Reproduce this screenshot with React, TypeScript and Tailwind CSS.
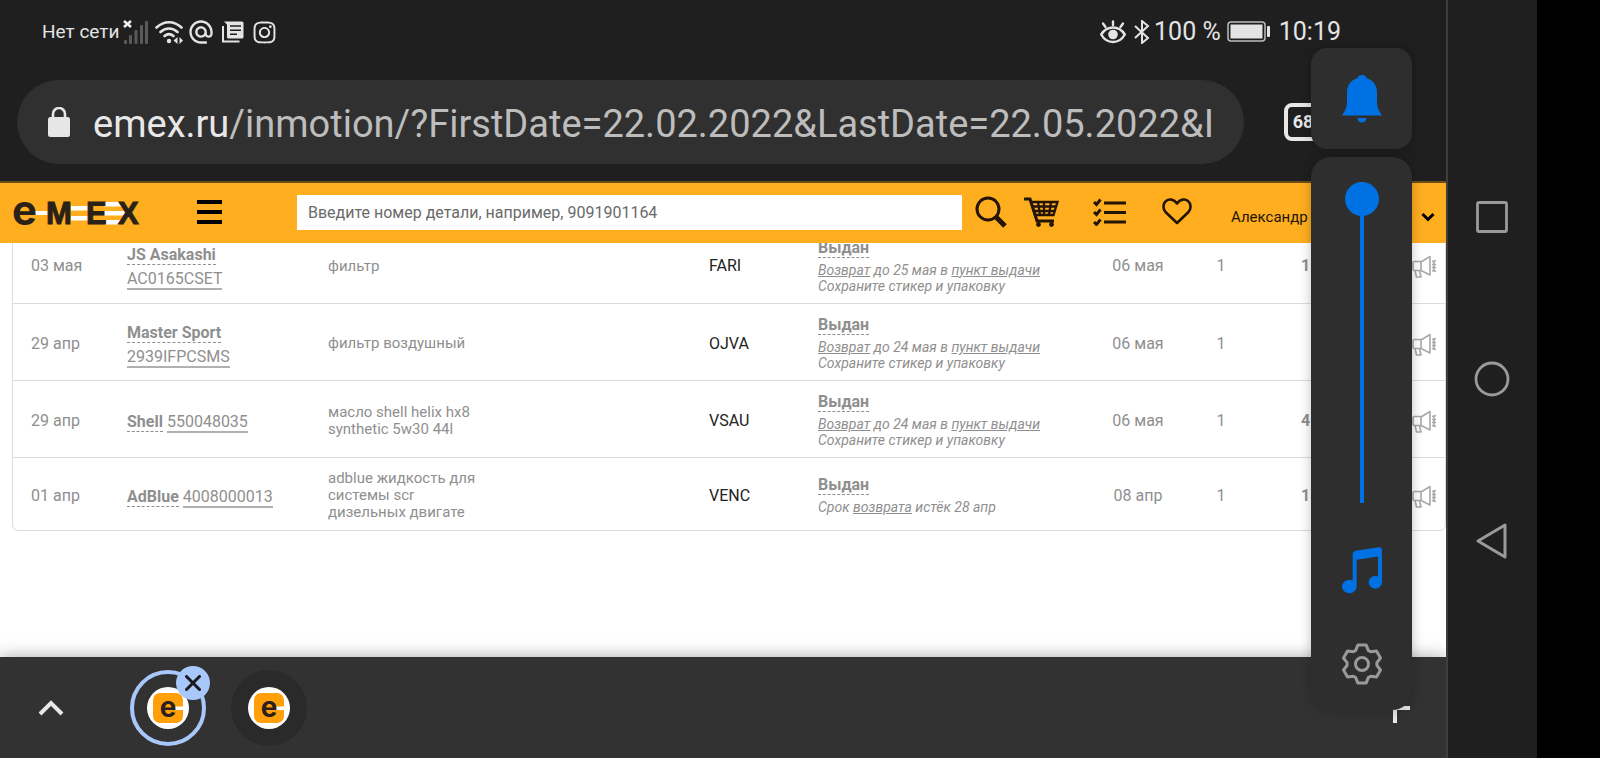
import type { ReactNode } from "react";
import { FaInstagram } from "react-icons/fa";
import { MdAlternateEmail } from "react-icons/md";

type Order = {
  date: string;
  brand: string;
  number: string;
  title: string;
  supplier: string;
  note: ReactNode;
  delivered: string;
  qty: string;
  price: string;
};

function ReturnNote({ until }: { until: string }) {
  return (
    <>
      <a href="#return" className="underline">Возврат</a> до {until} в{" "}
      <a href="#point" className="underline">пункт выдачи</a>
      <br />
      Сохраните стикер и упаковку
    </>
  );
}

const orders: Order[] = [
  {
    date: "03 мая",
    brand: "JS Asakashi",
    number: "AC0165CSET",
    title: "фильтр",
    supplier: "FARI",
    note: <ReturnNote until="25 мая" />,
    delivered: "06 мая",
    qty: "1",
    price: "1",
  },
  {
    date: "29 апр",
    brand: "Master Sport",
    number: "2939IFPCSMS",
    title: "фильтр воздушный",
    supplier: "OJVA",
    note: <ReturnNote until="24 мая" />,
    delivered: "06 мая",
    qty: "1",
    price: "",
  },
  {
    date: "29 апр",
    brand: "Shell",
    number: "550048035",
    title: "масло shell helix hx8 synthetic 5w30 44l",
    supplier: "VSAU",
    note: <ReturnNote until="24 мая" />,
    delivered: "06 мая",
    qty: "1",
    price: "4",
  },
  {
    date: "01 апр",
    brand: "AdBlue",
    number: "4008000013",
    title: "adblue жидкость для системы scr дизельных двигате",
    supplier: "VENC",
    note: (
      <>
        Срок <a href="#return" className="underline">возврата</a> истёк 28 апр
      </>
    ),
    delivered: "08 апр",
    qty: "1",
    price: "1",
  },
];

// Six-tooth gear outline around (22, 22)
const gearPoints = [0, 60, 120, 180, 240, 300]
  .flatMap((a) => [
    [a - 25, 15],
    [a - 12, 19.5],
    [a + 12, 19.5],
    [a + 25, 15],
  ])
  .map(([deg, r]) => {
    const rad = ((deg - 90) * Math.PI) / 180;
    return `${(22 + r * Math.cos(rad)).toFixed(1)},${(22 + r * Math.sin(rad)).toFixed(1)}`;
  })
  .join(" ");

function StatusBar() {
  return (
    <div className="flex h-16 items-center pr-[105px] pl-[42px] text-[#e4e4e4]">
      <span className="text-[19px]">Нет сети</span>
      <svg className="ml-1 h-6 w-[26px]" viewBox="0 0 26 24">
        <path d="M1 1l7 6M8 1l-7 6" stroke="#f0f0f0" strokeWidth="2.6" />
        <g fill="#5a5a5a">
          <rect x="1" y="20" width="3" height="4" rx="1" />
          <rect x="6" y="15" width="3" height="9" rx="1" />
          <rect x="11.5" y="10" width="3" height="14" rx="1" />
          <rect x="17" y="5" width="3" height="19" rx="1" />
          <rect x="22" y="1" width="3" height="23" rx="1" />
        </g>
      </svg>
      <svg className="ml-1.5 h-6 w-7" viewBox="0 0 28 24" fill="none" stroke="currentColor" strokeWidth="2.6" strokeLinecap="round">
        <path d="M1.500 7.500C9 .5 19 .5 26.500 7.500M5.500 12c5-4.600 12-4.600 17 0M9.500 16c2.500-2.200 6-2.600 9 0" />
        <circle cx="14" cy="21" r="2.2" fill="currentColor" stroke="none" />
        <path d="M22.500 17v7l-4-3.500zM24.500 17v7l3.500-3.500z" fill="currentColor" stroke="none" />
      </svg>
      <MdAlternateEmail className="ml-1 size-7" />
      <svg className="ml-[7px] size-[22px]" viewBox="0 0 22 22">
        <path d="M1 5v15.500h16.500" fill="none" stroke="currentColor" strokeWidth="2" />
        <path d="M2 .5h18a1.500 1.500 0 0 1 1.500 1.500v14a1.500 1.500 0 0 1-1.500 1.500H6.500A1.500 1.500 0 0 1 5 16V3.500z" fill="currentColor" />
        <path d="M8 5h11M8 9.200h11M8 13.200h7" stroke="#1f1f1f" strokeWidth="1.5" />
      </svg>
      <FaInstagram className="ml-2 size-[25px]" />

      <div className="ml-auto flex items-center text-[25px]">
        <svg className="h-6 w-[26px]" viewBox="0 0 26 24" fill="none" stroke="currentColor" strokeWidth="2.4" strokeLinecap="round">
          <path d="M1.200 14.500C4 10 8 7.500 13 7.500s9 2.500 11.800 7C22 19.500 18 22 13 22S4 19.500 1.200 14.500z" />
          <circle cx="13" cy="14.5" r="4.8" fill="currentColor" stroke="none" />
          <path d="M13 1.500V5M3 3.500l2.500 3.500M23 3.500L20.500 7" />
        </svg>
        <svg className="ml-2 h-6 w-4" viewBox="0 0 16 24" fill="none" stroke="currentColor" strokeWidth="2">
          <path d="M1 6l13 12-6 5V1l6 5L1 18" />
        </svg>
        <span className="ml-1">100 %</span>
        <svg className="mr-2 ml-1.5 h-[22px] w-11" viewBox="0 0 44 22">
          <rect x="1" y="1" width="37" height="19" rx="3" fill="none" stroke="#bdbdbd" strokeWidth="1.5" />
          <rect x="3.5" y="3.5" width="32" height="14" fill="currentColor" />
          <rect x="40" y="5" width="3" height="11" rx="1" fill="currentColor" />
        </svg>
        <time>10:19</time>
      </div>
    </div>
  );
}

function AddressBar() {
  return (
    <div className="flex items-center pt-4 pb-[17px] pl-[17px]">
      <button className="flex h-[84px] min-w-0 flex-1 cursor-text items-center rounded-full bg-[#303030] pr-3.5 pl-[30px] text-left">
        <svg className="h-[30px] w-6 shrink-0" viewBox="0 0 24 30" fill="#e6e6e6">
          <rect x="1" y="10" width="22" height="20" rx="2.5" />
          <path d="M6 11V7a6 6 0 0 1 12 0v4" fill="none" stroke="#e6e6e6" strokeWidth="2.6" />
        </svg>
        <span className="ml-[22px] pt-1 text-[38px] whitespace-nowrap text-[#bdbdbd]">
          <span className="text-[#e8e8e8]">emex.ru</span>/inmotion/?FirstDate=22.02.2022&amp;LastDate=22.05.2022&amp;I
        </span>
      </button>
      <button className="mr-[124px] ml-10 flex size-[38px] items-center justify-center rounded-lg border-4 border-[#e8e8e8] text-lg font-bold text-[#e8e8e8]">
        68
      </button>
    </div>
  );
}

function EmexLogo() {
  return (
    <svg className="h-7 w-[128px] overflow-visible" viewBox="0 0 128 28" fontFamily="'Liberation Sans', sans-serif" fontWeight="700">
      <g fill="#fff">
        <rect x="22" y="13" width="14" height="4" />
        <path d="M58 8h18v4.500H58zM58 18h18v4.500H58zM91 4h16l3 4.500H91zM91 13h24v4.500H91zM107 26.500H91V22h19z" />
      </g>
      <g fill="#2b2118" stroke="#2b2118">
        <text x="-1" y="27" fontSize="42" fontFamily="Inter, sans-serif" stroke="none">e</text>
        <text x="33" y="26" fontSize="31" strokeWidth="1">M</text>
        <text x="73" y="26" fontSize="31" strokeWidth="1">E</text>
        <text x="105" y="26" fontSize="31" strokeWidth="1">X</text>
      </g>
    </svg>
  );
}

function SiteHeader() {
  return (
    <header className="relative z-10 flex h-[62px] items-center border-t-2 border-[#6b4d1c] bg-[#ffae1f] pb-0.5 pl-[13px] text-[#231405]">
      <a href="#home" aria-label="emex">
        <EmexLogo />
      </a>
      <button aria-label="Меню" className="ml-14 flex w-[25px] flex-col gap-1.5">
        <span className="h-1 bg-black" />
        <span className="h-1 bg-black" />
        <span className="h-1 bg-black" />
      </button>
      <input
        type="text"
        aria-label="Номер детали"
        placeholder="Введите номер детали, например, 9091901164"
        className="ml-[75px] h-[35px] min-w-0 flex-1 bg-white px-[11px] text-base text-black outline-none placeholder:text-[#6a6a6a]"
      />
      <button aria-label="Найти" className="ml-[13px]">
        <svg className="size-8" viewBox="0 0 32 32" fill="none" stroke="currentColor">
          <circle cx="13" cy="13" r="11" strokeWidth="3" />
          <path d="M21 21l9 9" strokeWidth="5" />
        </svg>
      </button>
      <a href="#cart" aria-label="Корзина" className="ml-[17px]">
        <svg className="h-[30px] w-[35px]" viewBox="0 0 35 30" fill="none" stroke="currentColor" strokeWidth="2.3">
          <path d="M0 2h6l7 22h17" strokeWidth="3" />
          <path d="M7 5h26.500l-4 13H11zM8.500 9.500h24M10 14h21M14 5l2 13M20 5v13M27 5l-2 13" />
          <circle cx="14.5" cy="27.5" r="2.4" fill="currentColor" stroke="none" />
          <circle cx="27.5" cy="27.5" r="2.4" fill="currentColor" stroke="none" />
        </svg>
      </a>
      <a href="#orders" aria-label="Заказы" className="ml-[34px]">
        <svg className="h-7 w-[34px]" viewBox="0 0 34 28" fill="none" stroke="currentColor">
          <path d="M11 5h22M11 14.500h22M11 24h22" strokeWidth="3.2" />
          <path d="M1 4l2.500 2.500L7.500 1.500M1 14l2.500 2.500 4-5M1 24l2.500 2.500 4-5" strokeWidth="2.9" />
        </svg>
      </a>
      <a href="#favorites" aria-label="Избранное" className="ml-[35px]">
        <svg className="h-7 w-[30px]" viewBox="0 0 30 28" fill="none" stroke="currentColor" strokeWidth="2.6" strokeLinejoin="round">
          <path d="M15 25L3.500 14C.5 10.500 1 5.500 4 3s8-2 11 2.500c3-4.500 8-5 11-2.500s3.500 7.500.5 11z" />
        </svg>
      </a>
      <button className="mt-2.5 ml-[39px] flex w-[204px] items-center justify-between text-[15px]">
        Александр
        <svg className="h-2.5 w-3.5" viewBox="0 0 14 10" fill="none" stroke="#000" strokeWidth="3">
          <path d="M1.500 2L7 7.500 12.500 2" />
        </svg>
      </button>
      <span className="w-[11px]" />
    </header>
  );
}

function MegaphoneIcon() {
  return (
    <svg className="size-7" viewBox="0 0 28 28" fill="none" stroke="#a9a9a9" strokeWidth="1.6" strokeLinejoin="round">
      <path d="M3.500 9.500H10v9H3.500A1.500 1.500 0 0 1 2 17v-6a1.500 1.500 0 0 1 1.500-1.500zM10 10l9-5.500v18.500L10 18.500M4 18.500L5.500 25H10l-1.500-6.500" />
      <path d="M21 9.500l4-1M21 12.500h4M21 15.500h4M21 18.500l4 1M23 9v10" />
    </svg>
  );
}

function OrdersTable() {
  return (
    <div className="-mt-[18px] ml-3 rounded-b-md border border-[#dcdcdc]">
      <table className="w-full table-fixed border-collapse text-left text-base text-[#8f8f8f]">
        <colgroup>
          <col className="w-[114px]" />
          <col className="w-[201px]" />
          <col />
          <col className="w-[109px]" />
          <col className="w-[270px]" />
          <col className="w-[100px]" />
          <col className="w-[66px]" />
          <col className="w-[157px]" />
          <col className="w-[34px]" />
        </colgroup>
        <tbody>
          {orders.map((order) => (
            <tr key={order.number} className="h-[77px] border-b border-[#dcdcdc] last:h-[73px] last:border-b-0">
              <td className="pt-1 pl-[18px]">{order.date}</td>
              <td className="pt-1">
                {/* the code drops under the brand when both do not fit */}
                <div className="flex max-w-[160px] flex-wrap gap-x-1 pt-0.5 leading-6">
                  <span>
                    <a href="#brand" className="border-b border-dashed border-[#8f8f8f] font-bold">{order.brand}</a>
                  </span>
                  <span>
                    <a href="#part" className="border-b-2 border-[#b0b0b0]">{order.number}</a>
                  </span>
                </div>
              </td>
              <td className="pt-1">
                <p className="max-w-[155px] text-[15px] leading-[17px]">{order.title}</p>
              </td>
              <td className="pt-1 text-[#222]">{order.supplier}</td>
              <td className="pt-px">
                <a href="#status" className="border-b border-dashed border-[#8f8f8f] leading-6 font-bold">Выдан</a>
                <p className="mt-0.5 text-sm leading-4 italic">{order.note}</p>
              </td>
              <td className="pt-1 text-center">{order.delivered}</td>
              <td className="pt-1 text-center">{order.qty}</td>
              <td className="pt-1 pl-[47px] font-bold">{order.price}</td>
              <td className="pt-1">
                <button aria-label="Сообщить о проблеме" className="block">
                  <MegaphoneIcon />
                </button>
              </td>
            </tr>
          ))}
        </tbody>
      </table>
    </div>
  );
}

function Favicon() {
  return (
    <svg className="size-[42px]" viewBox="0 0 42 42">
      <circle cx="21" cy="21" r="21" fill="#fff" />
      <rect x="6" y="6" width="30" height="30" rx="7" fill="#ff9f0a" />
      <rect x="28" y="19.5" width="8" height="3.5" fill="#fff" />
      <text x="21" y="29.5" fontSize="28" fontWeight="700" fontFamily="Inter, sans-serif" fill="#2b2118" textAnchor="middle">
        e
      </text>
    </svg>
  );
}

function TabStrip() {
  return (
    <footer className="relative flex h-[101px] items-center bg-[#323232] pr-9 pl-[38px] shadow-[0_0_16px_rgba(0,0,0,0.35)]">
      <button aria-label="Развернуть">
        <svg className="h-4 w-[26px]" viewBox="0 0 26 16" fill="none" stroke="#e8e8e8" strokeWidth="4">
          <path d="M2 14L13 3l11 11" />
        </svg>
      </button>
      <div className="relative ml-[66px]">
        <button aria-label="emex" className="flex size-[76px] items-center justify-center rounded-full border-4 border-[#a8c7fa]">
          <Favicon />
        </button>
        <button aria-label="Закрыть" className="absolute -top-1 -right-1 flex size-[34px] items-center justify-center rounded-full bg-[#a8c7fa]">
          <svg className="size-4" viewBox="0 0 16 16" stroke="#1b1b1b" strokeWidth="3" strokeLinecap="round">
            <path d="M1.500 1.500l13 13M14.500 1.500l-13 13" />
          </svg>
        </button>
      </div>
      <button aria-label="emex" className="ml-[25px] flex size-[76px] items-center justify-center rounded-full bg-[#2a2a2a]">
        <Favicon />
      </button>
      <button aria-label="Новая вкладка" className="ml-auto">
        <svg className="size-[30px]" viewBox="0 0 30 30" stroke="#e8e8e8" strokeWidth="4">
          <path d="M15 0v30M0 15h30" />
        </svg>
      </button>
    </footer>
  );
}

function VolumePanel() {
  return (
    <div className="absolute top-12 right-[34px] z-20 flex w-[101px] flex-col gap-2">
      <button aria-label="Звонок" className="flex h-[101px] items-center justify-center rounded-2xl bg-[#2e2e2e] shadow-[0_0_12px_rgba(0,0,0,0.25)]">
        <svg className="h-12 w-10" viewBox="0 0 40 48" fill="#0071e3">
          <path d="M20 0c-2.500 0-4 1.300-4.500 3C9 5 5 10.500 5 17v10c0 6-2.500 9.500-5 13.500h40c-2.500-4-5-7.500-5-13.500V17c0-6.500-4-12-10.500-14-.5-1.700-2-3-4.500-3z" />
          <path d="M15.500 43h9a4.500 4.500 0 0 1-9 0z" />
        </svg>
      </button>
      <div className="flex h-[553px] flex-col items-center rounded-[20px] bg-[#2e2e2e] pt-[25px] shadow-[0_0_12px_rgba(0,0,0,0.25)]">
        <input
          type="range"
          aria-label="Громкость"
          min={0}
          max={100}
          defaultValue={100}
          className="h-[321px] w-[34px] appearance-none bg-transparent [direction:rtl] [writing-mode:vertical-lr] [&::-webkit-slider-runnable-track]:h-full [&::-webkit-slider-runnable-track]:w-1 [&::-webkit-slider-runnable-track]:bg-[#0071e3] [&::-webkit-slider-thumb]:-ml-[15px] [&::-webkit-slider-thumb]:size-[34px] [&::-webkit-slider-thumb]:appearance-none [&::-webkit-slider-thumb]:rounded-full [&::-webkit-slider-thumb]:bg-[#0071e3]"
        />
        <svg className="mt-11 h-[47px] w-10" viewBox="0 0 120 140" fill="#0071e3">
          <path d="M32 22Q32 13 41 11L110 0q10-1 10 9v96a20 19 0 1 1-12-17V28L44 38v82a22 20 0 1 1-12-20z" />
        </svg>
        <button aria-label="Настройки звука" className="mt-12">
          <svg className="size-11" viewBox="0 0 44 44" fill="none" stroke="#9a9a9a" strokeWidth="3" strokeLinejoin="round">
            <polygon points={gearPoints} />
            <circle cx="22" cy="22" r="6.5" />
          </svg>
        </button>
      </div>
    </div>
  );
}

function SystemNav() {
  return (
    <nav className="relative flex w-[91px] shrink-0 flex-col items-center justify-center gap-[126px] border-l-2 border-[#3d3d3d] bg-[#1f1f1f] pr-0.5">
      <button aria-label="Недавние">
        <svg className="size-9" viewBox="0 0 36 36" fill="none" stroke="#9a9a9a" strokeWidth="2.8">
          <rect x="3.5" y="3.5" width="29" height="29" rx="1.5" />
        </svg>
      </button>
      <button aria-label="Домой">
        <svg className="size-9" viewBox="0 0 36 36" fill="none" stroke="#9a9a9a" strokeWidth="2.8">
          <circle cx="18" cy="18" r="16" />
        </svg>
      </button>
      <button aria-label="Назад">
        <svg className="size-9" viewBox="0 0 36 36" fill="none" stroke="#9a9a9a" strokeWidth="3" strokeLinejoin="round">
          <path d="M4 18L31 2v32z" />
        </svg>
      </button>
    </nav>
  );
}

export default function App() {
  return (
    <div className="flex min-h-screen bg-black font-[Roboto,sans-serif]">
      <div className="relative flex min-w-0 flex-1 flex-col bg-[#1f1f1f]">
        <StatusBar />
        <AddressBar />
        <SiteHeader />
        <main className="flex-1 bg-white">
          <OrdersTable />
        </main>
        <TabStrip />
        <VolumePanel />
      </div>
      <SystemNav />
      <div className="w-[63px] shrink-0" />
    </div>
  );
}
